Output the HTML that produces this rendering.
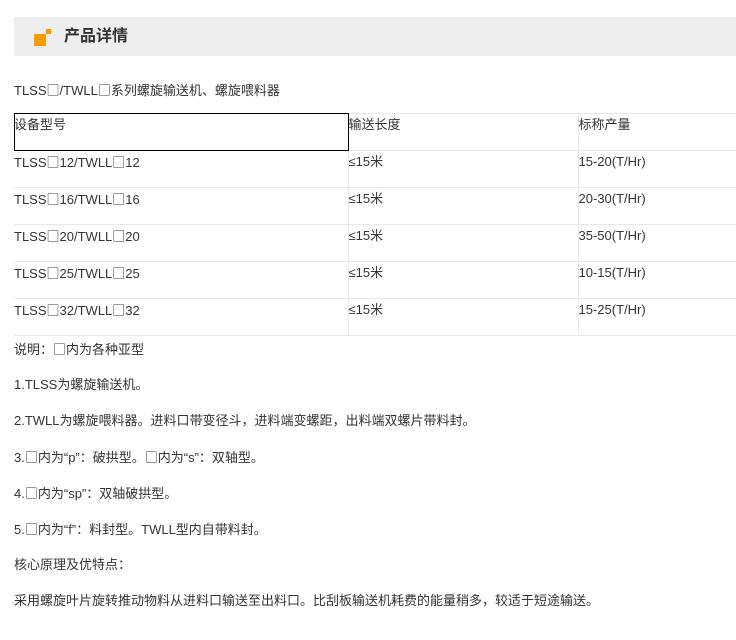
<!DOCTYPE html>
<html><head><meta charset="utf-8"><style>
body{margin:0;background:#fff;width:736px;height:640px;overflow:hidden;font-family:"Liberation Sans","Noto Sans CJK SC",sans-serif;font-size:13px;color:#333;}
b.q{font-weight:normal;font-family:"Noto Sans CJK SC",sans-serif;}
.hd{position:absolute;left:14px;top:17px;width:722px;height:39px;background:#eeeeee;}
.ic1{position:absolute;left:20px;top:17px;width:12px;height:12px;background:#ff9900;}
.ic2{position:absolute;left:32px;top:12px;width:5px;height:5px;background:#ff9900;}
.ttl{position:absolute;left:50px;top:8px;font-size:16px;font-weight:bold;color:#333;line-height:24px;}
.p{position:absolute;left:14px;line-height:18px;white-space:nowrap;}
table{position:absolute;left:14px;top:113px;border-collapse:collapse;}
td{height:37px;border:1px solid #e8e8e8;vertical-align:top;padding:3px 0 0 0;line-height:16px;box-sizing:border-box;}
td.c1{width:334px;border-left:none}td.c2{width:230px}td.c3{width:158px;border-right:none}
.blk{position:absolute;left:14px;top:113px;width:335px;height:38px;border:1px solid #000;box-sizing:border-box;}
</style></head><body>
<div class="hd"><div class="ic1"></div><div class="ic2"></div><div class="ttl">产品详情</div></div>
<div class="p" style="top:81px">TLSS<b class="q">□</b>/TWLL<b class="q">□</b>系列螺旋输送机、螺旋喂料器</div>
<table>
<tr><td class="c1">设备型号</td><td class="c2">输送长度</td><td class="c3">标称产量</td></tr>
<tr><td class="c1">TLSS<b class="q">□</b>12/TWLL<b class="q">□</b>12</td><td class="c2">≤15米</td><td class="c3">15-20(T/Hr)</td></tr>
<tr><td class="c1">TLSS<b class="q">□</b>16/TWLL<b class="q">□</b>16</td><td class="c2">≤15米</td><td class="c3">20-30(T/Hr)</td></tr>
<tr><td class="c1">TLSS<b class="q">□</b>20/TWLL<b class="q">□</b>20</td><td class="c2">≤15米</td><td class="c3">35-50(T/Hr)</td></tr>
<tr><td class="c1">TLSS<b class="q">□</b>25/TWLL<b class="q">□</b>25</td><td class="c2">≤15米</td><td class="c3">10-15(T/Hr)</td></tr>
<tr><td class="c1">TLSS<b class="q">□</b>32/TWLL<b class="q">□</b>32</td><td class="c2">≤15米</td><td class="c3">15-25(T/Hr)</td></tr>
</table>
<div class="blk"></div>
<div class="p" style="top:340px">说明：<b class="q">□</b>内为各种亚型</div>
<div class="p" style="top:376px">1.TLSS为螺旋输送机。</div>
<div class="p" style="top:412px">2.TWLL为螺旋喂料器。进料口带变径斗，进料端变螺距，出料端双螺片带料封。</div>
<div class="p" style="top:448px">3.<b class="q">□</b>内为“p”：破拱型。<b class="q">□</b>内为“s”：双轴型。</div>
<div class="p" style="top:484px">4.<b class="q">□</b>内为“sp”：双轴破拱型。</div>
<div class="p" style="top:520px">5.<b class="q">□</b>内为“f”：料封型。TWLL型内自带料封。</div>
<div class="p" style="top:556px">核心原理及优特点：</div>
<div class="p" style="top:592px">采用螺旋叶片旋转推动物料从进料口输送至出料口。比刮板输送机耗费的能量稍多，较适于短途输送。</div>
</body></html>
